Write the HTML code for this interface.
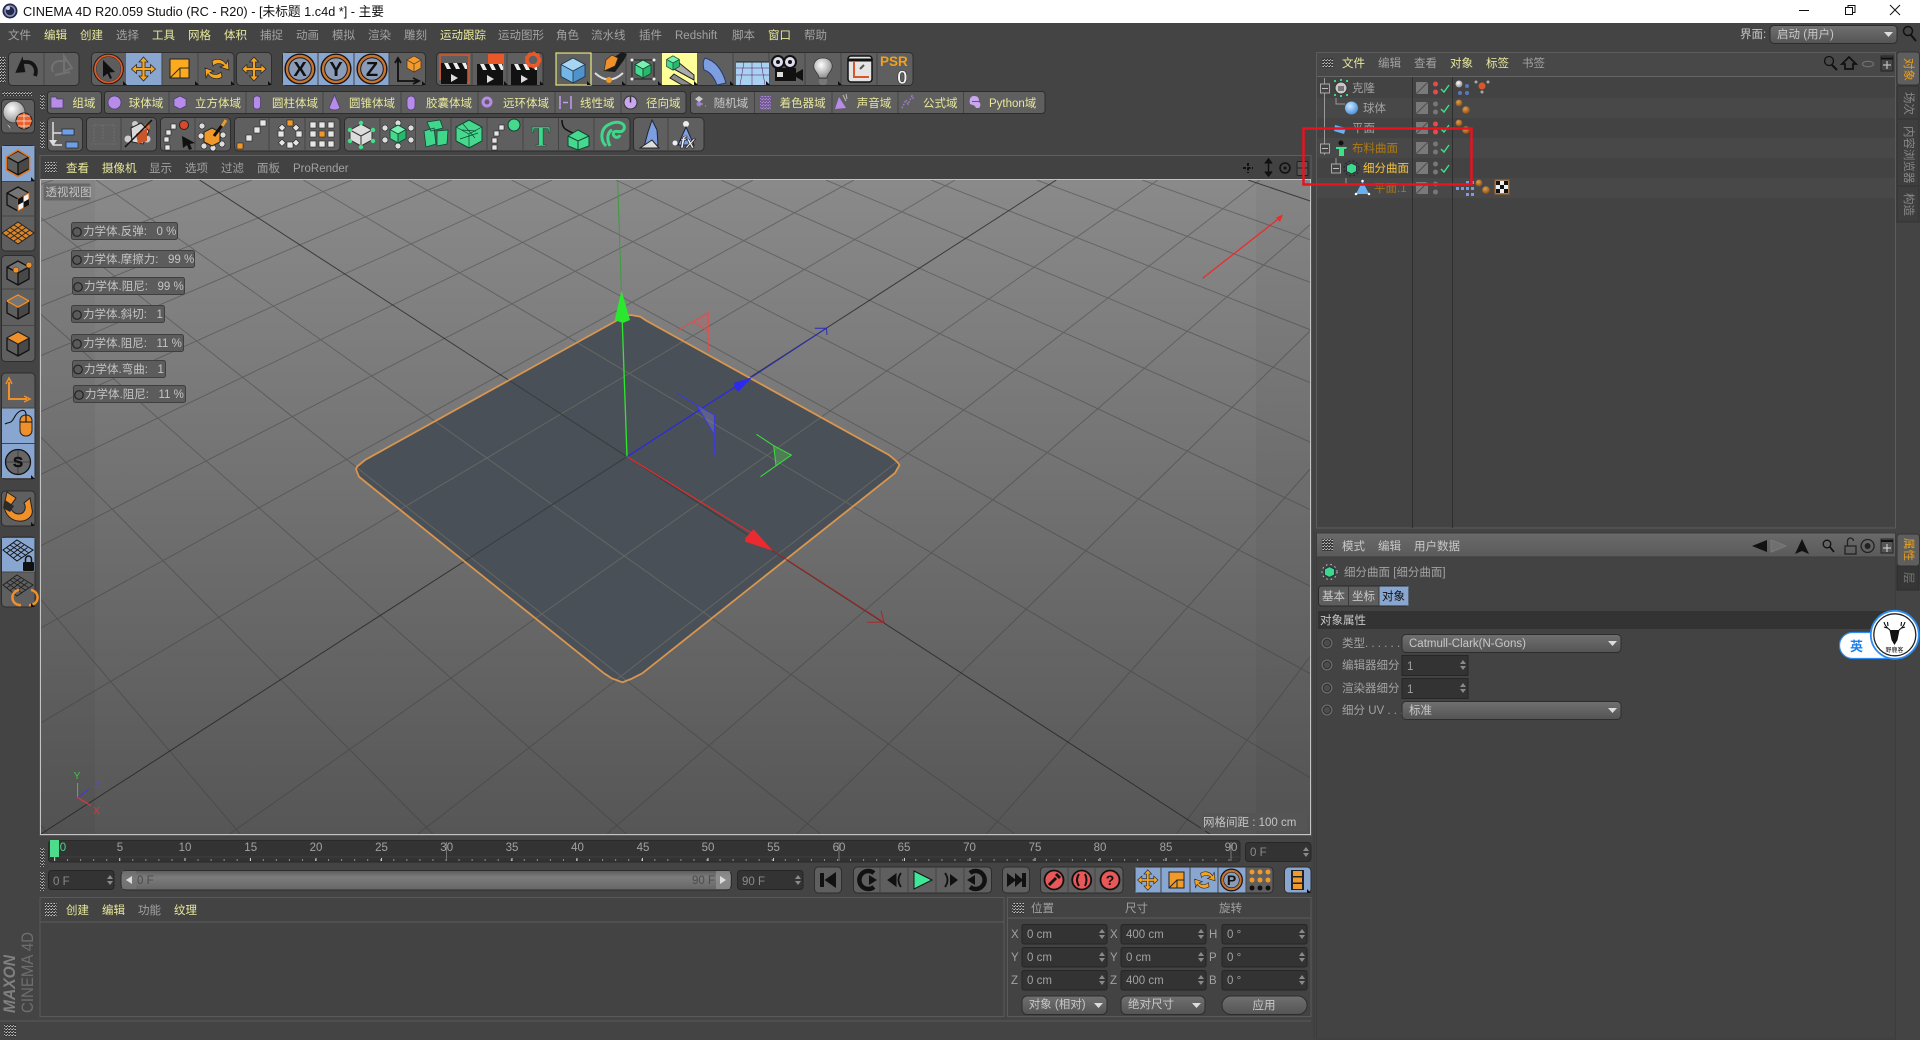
<!DOCTYPE html>
<html><head><meta charset="utf-8"><title>CINEMA 4D</title>
<style>
html,body{margin:0;padding:0;background:#444;width:1920px;height:1040px;overflow:hidden}
svg{position:absolute;left:0;top:0;display:block}
text{font-family:"Liberation Sans","Noto Sans CJK SC",sans-serif;font-size:11.5px;fill:#a2a2a2;white-space:pre}
.y{fill:#e8e89c}.w{fill:#c8c8c8}.k{fill:#111}.o{fill:#e8a020}.d{fill:#5a5a5a}
.g{fill:#5f5f5f;stroke:#2d2d2d;stroke-width:1}
.s{stroke:#444;stroke-width:1;fill:none}
.f{fill:#333;stroke:#262626}
.dd{fill:url(#dg);stroke:#2d2d2d}
.lb{fill:#5c5c5c;stroke:#3f3f3f}
.lt{fill:#c4c4c4}
.bl{fill:#88a6d0}
.tb{fill:#3e3e3e;stroke:#333}
</style></head><body>
<svg width="1920" height="1040" viewBox="0 0 1920 1040" xmlns="http://www.w3.org/2000/svg">
<defs>
<pattern id="dt" width="3" height="3" patternUnits="userSpaceOnUse"><rect width="3" height="3" fill="#3a3a3a"/><rect width="1" height="1" fill="#c4c4c4"/><rect x="2" y="0" width="1" height="1" fill="#8c8c8c"/><rect x="1" y="2" width="1" height="1" fill="#a8a8a8"/></pattern>
<linearGradient id="dg" x1="0" y1="0" x2="0" y2="1"><stop offset="0" stop-color="#707070"/><stop offset="1" stop-color="#545454"/></linearGradient>
<linearGradient id="vp" x1="0" y1="0" x2="0" y2="1"><stop offset="0" stop-color="#8a8a8a"/><stop offset="1" stop-color="#565656"/></linearGradient>
<linearGradient id="sl" x1="0" y1="0" x2="0" y2="1"><stop offset="0" stop-color="#5c5c5c"/><stop offset=".35" stop-color="#7c7c7c"/><stop offset="1" stop-color="#666"/></linearGradient>
<linearGradient id="hd" x1="0" y1="0" x2="0" y2="1"><stop offset="0" stop-color="#6a6a6a"/><stop offset="1" stop-color="#5a5a5a"/></linearGradient>
<radialGradient id="bb" cx=".4" cy=".35" r=".7"><stop offset="0" stop-color="#cfe6ff"/><stop offset="1" stop-color="#3f8fe0"/></radialGradient>
<radialGradient id="brn" cx=".4" cy=".35" r=".7"><stop offset="0" stop-color="#e0a050"/><stop offset="1" stop-color="#8a4a10"/></radialGradient>
<radialGradient id="wb" cx=".4" cy=".35" r=".7"><stop offset="0" stop-color="#fff"/><stop offset="1" stop-color="#888"/></radialGradient>
<g id="cb"><path d="M0-12 11-6 0 0-11-6Z" fill="#757575"/><path d="M-11-6 0 0V12L-11 6Z" fill="#5e5e5e"/><path d="M0 0 11-6V6L0 12Z" fill="#484848"/><path d="M0-12 11-6V6L0 12-11 6V-6ZM-11-6 0 0 11-6M0 0V12" fill="none" stroke="#111" stroke-width="1.3"/></g>
<g id="gc"><path d="M0-9 8-4.5 0 0-8-4.5Z" fill="#7cf0b0"/><path d="M-8-4.5 0 0V9L-8 4.5Z" fill="#46d88c"/><path d="M0 0 8-4.5V4.5L0 9Z" fill="#28b86c"/><path d="M0-9 8-4.5V4.5L0 9-8 4.5V-4.5ZM-8-4.5 0 0 8-4.5M0 0V9" fill="none" stroke="#143" stroke-width=".9"/></g>
<path id="mv" d="M0-12 4.5-7H1.5V-1.5H7V-4.5L12 0 7 4.5V1.5H1.5V7H4.5L0 12-4.5 7H-1.5V1.5H-7V4.5L-12 0-7-4.5V-1.5H-1.5V-7H-4.5Z" fill="#f7a41e" stroke="#2a2a2a" stroke-width=".8"/>
<path id="rt" d="M-4-8A10 10 0 0 1 10-5L12-9 13 1 4-2 8-3.500A8 8 0 0 0-3-3ZM6 8A10 10 0 0 1-8 5L-10 9-11-1-2 2-6 3.500A8 8 0 0 0 5 3Z" fill="#f7a41e" stroke="#222" stroke-width=".7"/>
<path id="spin" d="M0 4 3 0 6 4ZM0 6H6L3 10Z" fill="#8a8a8a"/>
<path id="tri" d="M0 0H9L4.500 5Z" fill="#ddd"/>
<g id="clap"><rect x="-13" y="-3" width="26" height="15" fill="#111"/><path d="M-13-9H13V-3H-13Z" fill="#111"/><path d="M-10-9-7-3H-3L-6-9ZM-1-9 2-3H6L3-9ZM8-9 11-3H13V-6L12-9Z" fill="#eee"/><path d="M-3 2 4 6-3 10Z" fill="#ddd"/></g>
<g id="rad"><circle r="6" fill="#6a6a6a" stroke="#3a3a3a" stroke-width=".8"/><circle r="3.700" fill="#4c4c4c" stroke="#2f2f2f"/></g>
<g id="ck"><path d="M-4 0-1 3 4-4" fill="none" stroke="#3fe08a" stroke-width="1.4"/></g>
<g id="bd"><circle cx="0" cy="0" r="3.400" fill="url(#brn)"/><circle cx="7" cy="7" r="3.800" fill="url(#brn)"/></g>
<g id="gl"><path fill="none" d="M41 184.250L53.200 180M41 221L152.800 180M41 261.100L251.900 180M41 305.900L351.900 180M41 355.600L451.600 180M41 411.400L552.100 180M41 474.300L652.300 180M41 545.700L753 180M41 627.800L853.900 180M41 722.800L955 180M229.500 834L1157.800 180M417.900 834L1259.800 180M607 834L1310 224.800M796.600 834L1310 331M986.300 834L1310 469.200M1176.400 834L1310 656.700M41 825.100L47.400 834M41 599.600L240.200 834M41 437.200L433 834M41 314.300L626.500 834M41 218L820.600 834M96.200 180L1015 834M303.300 180L1310 777.600M408.500 180L1310 673.500M511.500 180L1310 586.200M616 180L1310 509.500M720.900 180L1310 442M825.800 180L1310 382.600M931 180L1310 329.700M1036.600 180L1310 282.300M1142 180L1310 239.700"/></g>
<path id="pl" d="M615 321.500 625 316 631 315 640.400 316.700 646 320.500 889 455 897 461.700 899.500 465 895 473 642.300 673.300 631 679 622.400 682.300 611.700 678.300 604 673.300 363 480 359 476.700 356 469.300 357 466.700 365 460Z"/>
<clipPath id="plc"><use href="#pl"/></clipPath>
<clipPath id="vc"><rect x="41" y="180" width="1269" height="654"/></clipPath>
</defs>

<rect width="1920" height="1040" fill="#444"/>
<!-- title bar -->
<rect width="1920" height="23" fill="#fff"/>
<circle cx="10" cy="11" r="7.500" fill="#222a48"/><circle cx="10" cy="11" r="5" fill="none" stroke="#8a90c0" stroke-width="1.500"/><circle cx="8" cy="8" r="2" fill="#cfd4ee"/>
<text x="23" y="16" style="font-size:13px;fill:#111" textLength="361" lengthAdjust="spacingAndGlyphs">CINEMA 4D R20.059 Studio (RC - R20) - [未标题 1.c4d *] - 主要</text>
<path d="M1799 10.500H1809" stroke="#111" fill="none"/>
<path d="M1845.500 7.500H1852.500V14.500H1845.500ZM1848 7V5.500H1855V12.500H1853" stroke="#111" fill="none"/>
<path d="M1890 5 1900 15M1900 5 1890 15" stroke="#111" fill="none"/>

<!-- menu -->
<g>
<text x="8" y="39">文件</text><text class="y" x="44" y="39">编辑</text><text class="y" x="80" y="39">创建</text><text x="116" y="39">选择</text><text class="y" x="152" y="39">工具</text><text class="y" x="188" y="39">网格</text><text class="y" x="224" y="39">体积</text><text x="260" y="39">捕捉</text><text x="296" y="39">动画</text><text x="332" y="39">模拟</text><text x="368" y="39">渲染</text><text x="404" y="39">雕刻</text><text class="y" x="440" y="39">运动跟踪</text><text x="498" y="39">运动图形</text><text x="556" y="39">角色</text><text x="591" y="39">流水线</text><text x="639" y="39">插件</text><text x="675" y="39">Redshift</text><text x="732" y="39">脚本</text><text class="y" x="768" y="39">窗口</text><text x="804" y="39">帮助</text>
<text x="1740" y="38" class="w">界面:</text>
<rect x="1770" y="25.500" width="127" height="18" rx="4" class="dd"/><text x="1777" y="38" class="w">启动 (用户)</text><use href="#tri" x="1884" y="32"/>
<circle cx="1908" cy="31" r="4.500" fill="none" stroke="#111" stroke-width="1.500"/><path d="M1911 35 1916 41" stroke="#111" stroke-width="2"/>
</g>

<!-- grips -->
<rect x="0" y="57" width="6" height="26" fill="url(#dt)"/><rect x="40" y="94" width="5" height="15" fill="url(#dt)"/><rect x="40" y="122" width="5" height="26" fill="url(#dt)"/>
<rect x="2" y="91" width="30" height="5" fill="url(#dt)"/>

<!-- toolbar row 1 -->
<rect class="g" x="8.500" y="52.500" width="70.500" height="33" rx="4"/><path class="s" d="M44 53V85"/>
<path d="M35 76C38 68 33 62 27 62H21" fill="none" stroke="#151515" stroke-width="3.800"/><path d="M14 72 24 57V73Z" fill="#151515" transform="rotate(-10 20 65)"/>
<path d="M53 72C50 66 54 61 60 61H66M72 68 64 56V71ZM55 75 70 72" fill="none" stroke="#727272" stroke-width="2"/>

<rect class="g" x="91.500" y="52.500" width="142.500" height="33" rx="4"/><rect class="bl" x="126" y="53" width="36" height="32"/><path class="s" d="M162 53V85M198 53V85"/>
<circle cx="108.500" cy="69" r="13.800" fill="#5d5d5d" stroke="#1e1410" stroke-width="3"/><circle cx="108.500" cy="69" r="13.500" fill="none" stroke="#dc5a2a" stroke-width="1.800"/>
<path d="M103 60 115 72 109.500 72.500 112 78 110 79 107.500 73.500 103 77Z" fill="#111"/>
<use href="#mv" x="143.500" y="69"/>
<path d="M170 59H189V78H170Z" fill="#fbab1d" stroke="#222"/><path d="M170 78 180 68H189M180 68V78" fill="none" stroke="#2a2a2a" stroke-width="1"/>
<use href="#rt" x="216" y="69"/>
<rect class="g" x="236.500" y="52.500" width="35" height="33" rx="4"/><use href="#mv" x="254" y="69"/>

<rect class="g" x="282.500" y="52.500" width="143" height="33" rx="4"/><rect class="bl" x="283" y="53" width="106" height="32"/><path class="s" d="M318 53V85M354 53V85M389 53V85"/>
<g fill="#8a9cb8" stroke="#1e1410" stroke-width="1.500"><circle cx="300" cy="69" r="14.800"/><circle cx="336" cy="69" r="14.800"/><circle cx="372" cy="69" r="14.800"/></g>
<g fill="none" stroke="#c8742a" stroke-width="2.200"><circle cx="300" cy="69" r="13"/><circle cx="336" cy="69" r="13"/><circle cx="372" cy="69" r="13"/></g>
<g fill="none" stroke="#1e1410" stroke-width="1"><circle cx="300" cy="69" r="11.300"/><circle cx="336" cy="69" r="11.300"/><circle cx="372" cy="69" r="11.300"/></g>
<g><text class="k" x="300" y="76" text-anchor="middle" style="font-size:20px;font-weight:700">X</text><text class="k" x="336" y="76" text-anchor="middle" style="font-size:20px;font-weight:700">Y</text><text class="k" x="372" y="76" text-anchor="middle" style="font-size:20px;font-weight:700">Z</text></g>
<path d="M398 59V81H417M395 63 398 58 401 63M413 78 419 81 413 84" fill="none" stroke="#111" stroke-width="1.800"/>
<path d="M407 60 414 56 421 60 414 64ZM407 60V68L414 72V64ZM414 64 421 60V68L414 72Z" fill="#f39a2d" stroke="#432" stroke-width=".7"/>

<rect class="g" x="436.500" y="52.500" width="106.500" height="33" rx="4"/><path class="s" d="M472 53V85M507 53V85"/>
<path d="M440 80V55H469V83H462" fill="none" stroke="#d8562a" stroke-width="1.500"/>
<use href="#clap" x="454" y="72"/>
<path d="M488 54H504V70H488Z" fill="#e8582a"/><use href="#clap" x="490" y="73"/>
<use href="#clap" x="524" y="73"/><circle cx="533" cy="60" r="6" fill="none" stroke="#e8582a" stroke-width="3.500"/><circle cx="533" cy="60" r="7.500" fill="none" stroke="#e8582a" stroke-width="1.800" stroke-dasharray="2.500 2.500"/>

<rect class="g" x="555.500" y="52.500" width="357.500" height="33" rx="4"/>
<rect x="662" y="53" width="35" height="32" fill="#ffff99"/><path class="s" d="M591 53V85M626 53V85M733 53V85M769 53V85M805 53V85M841 53V85M877 53V85"/>
<rect x="556" y="53" width="35" height="32" fill="none" stroke="#e8e880" stroke-width="1.200"/>
<path d="M573 58 585 64.500 573 71 561 64.500Z" fill="#a7d6f4"/><path d="M561 64.500 573 71V83L561 76.500Z" fill="#73b6e8"/><path d="M573 71 585 64.500V76.500L573 83Z" fill="#4f93cc"/><path d="M573 58 585 64.500V76.500L573 83 561 76.500V64.500ZM561 64.500 573 71 585 64.500M573 71V83" fill="none" stroke="#234" stroke-width=".8"/>
<path d="M604 71 608 61 622 52 627 54 624 60 615 72Z" fill="#1a1a1a"/><path d="M604 71 606 60 612 55 618 58 615 66Z" fill="#f0902a" stroke="#332" stroke-width=".7"/><path d="M595 73Q609 86 623 73" fill="none" stroke="#ddd" stroke-width="2"/><circle cx="609" cy="80" r="3" fill="#f09a2a"/>
<use href="#gc" x="643" y="69"/><path d="M632 60H654V79H632Z" fill="none" stroke="#222"/><path d="M632 60h.01M654 60h.01M632 79h.01M654 79h.01" stroke="#eee" stroke-width="3" stroke-linecap="round"/>
<path d="M672 68 694 80V75L678 62Z" fill="#aaa" stroke="#222"/><path d="M674 74 692 85H682L670 78Z" fill="#8a8a8a" stroke="#222"/><use href="#gc" transform="translate(673 63) scale(.8)"/>
<path d="M705 58Q720 62 726 83L717 85Q712 72 704 70 702 62 705 58Z" fill="#7d9ee0" stroke="#2a3a66"/>
<path d="M736 62H769V85H736Z" fill="#a9d2f0"/><path d="M736 68H769M736 75H769M752 62V85M744 62 740 85M761 62 765 85" stroke="#516" stroke-width=".5" fill="none"/><path d="M736 62H769" stroke="#222"/>
<circle cx="778" cy="62" r="6" fill="#dde" stroke="#111" stroke-width="2"/><circle cx="790" cy="62" r="6" fill="#dde" stroke="#111" stroke-width="2"/><circle cx="778" cy="62" r="2" fill="#111"/><circle cx="790" cy="62" r="2" fill="#111"/><rect x="775" y="68" width="21" height="13" fill="#111"/><path d="M796 73 803 69V81L796 77Z" fill="#111"/><rect x="777" y="72" width="6" height="5" fill="#ddd"/>
<path d="M823 58C830 58 833 63 832 68 831 72 827 74 827 78H819C819 74 815 72 814 68 813 63 816 58 823 58Z" fill="url(#wb)" stroke="#333" stroke-width=".7"/><path d="M819 79H827V83L825 85H821L819 83Z" fill="#777"/>
<rect x="848" y="56" width="24" height="26" rx="3" fill="#e4e4e4" stroke="#111" stroke-width="1.500"/><path d="M848 60H872" stroke="#111" stroke-width="3"/><path d="M854 62V77H869" fill="none" stroke="#d8562a" stroke-width="2"/><path d="M860 69 864 65" stroke="#555" stroke-width="2"/>
<text x="880" y="66" style="font-size:13.500px;font-weight:700;fill:#f0a020">PSR</text><text x="897" y="84" style="font-size:19px;font-weight:700;fill:#f2f2f2;stroke:#222;stroke-width:.5">0</text>
<g fill="#111"><path d="M123 85V81L127 85ZM195 85V81L199 85ZM231 85V81L235 85Z"/><path d="M268 85V81L272 85ZM422 85V81L426 85ZM504 85V81L508 85ZM540 85V81L544 85ZM587 85V81L591 85ZM622 85V81L626 85ZM658 85V81L662 85ZM694 85V81L698 85ZM730 85V81L734 85ZM766 85V81L770 85ZM838 85V81L842 85Z"/></g>

<!-- row 2 -->
<rect class="g" x="47.500" y="91.500" width="54" height="22" rx="3"/>
<rect class="g" x="104.500" y="91.500" width="581.500" height="22" rx="3"/>
<rect class="g" x="690.500" y="91.500" width="354.500" height="22" rx="3"/>
<path class="s" d="M169 92V113M246 92V113M323 92V113M401 92V113M478 92V113M555 92V113M621 92V113M754.500 92V113M832 92V113M898 92V113M963.500 92V113"/>
<g fill="#b78ce8" stroke="#4a3a70" stroke-width=".7">
<path d="M51 97H56L57 99H63V108H51Z"/><circle cx="114.500" cy="102.500" r="6.500"/><path d="M180 96 186 99V106L180 109 174 106V99Z"/><rect x="253.500" y="96" width="7" height="13" rx="3"/><path d="M334.500 95 340 108Q334.500 112 329 108Z"/><rect x="407" y="96" width="8" height="14" rx="4"/>
</g>
<circle cx="487" cy="102" r="4" fill="none" stroke="#b78ce8" stroke-width="3"/><path d="M560 96V109M571 96V109M563 102.500H568" stroke="#c49cf0" stroke-width="1.500" fill="none"/>
<circle cx="630.500" cy="102.500" r="6.500" fill="#c9a6f0" stroke="#333"/><path d="M630.500 96V102.500" stroke="#333" stroke-width="1.500"/>
<circle cx="699" cy="104" r="2.500" fill="#a27ad8"/><path d="M695 99 699 96 703 99 699 102Z" fill="#ccc"/><path d="M700 104h3m2 2h1" stroke="#aaa"/>
<rect x="760" y="96" width="11" height="14" fill="url(#dt)"/><rect x="760" y="96" width="11" height="14" fill="#9a70d0" opacity=".6"/>
<path d="M835 109 839 97 846 108Z" fill="#b78ce8"/><path d="M843 95 846 101M846 94 847 99" stroke="#bbb"/>
<path d="M902 108 906 100 908 104 912 96 914 100" fill="none" stroke="#a27ad8" stroke-dasharray="1.500 1.500" stroke-width="1.500"/>
<path d="M974 96C978 96 979 98 979 101H972V102H978C981 102 981 106 979 108H976C975 105 972 105 970 104 969 100 970 96 974 96Z" fill="#c9a6f0"/>
<g><text class="y" x="72.400" y="107">组域</text><text class="y" x="128.800" y="107">球体域</text><text class="y" x="195" y="107">立方体域</text><text class="y" x="272" y="107">圆柱体域</text><text class="y" x="349" y="107">圆锥体域</text><text class="y" x="426" y="107">胶囊体域</text><text class="y" x="503" y="107">远环体域</text><text class="y" x="580" y="107">线性域</text><text class="y" x="646" y="107">径向域</text><text x="713.700" y="107" class="w">随机域</text><text class="y" x="779.600" y="107">着色器域</text><text class="y" x="856.800" y="107">声音域</text><text class="y" x="923" y="107">公式域</text><text class="y" x="989" y="107">Python域</text></g>

<!-- row 3 -->
<g>
<rect class="g" x="47.500" y="117.500" width="35" height="33.500" rx="4"/>
<rect class="g" x="86.500" y="117.500" width="70" height="33.500" rx="4"/><path class="s" d="M121 118V151"/>
<rect class="g" x="160.500" y="117.500" width="70" height="33.500" rx="4"/><path class="s" d="M195 118V151"/>
<rect class="g" x="234.500" y="117.500" width="105.500" height="33.500" rx="4"/><path class="s" d="M269 118V151M305 118V151"/>
<rect class="g" x="344.500" y="117.500" width="285.500" height="33.500" rx="4"/><path class="s" d="M380 118V151M415.500 118V151M451 118V151M487 118V151M523 118V151M558.500 118V151M594 118V151"/>
<rect class="g" x="633.500" y="117.500" width="70.500" height="33.500" rx="4"/><path class="s" d="M668 118V151"/>
</g>
<path d="M53 122V142M53 136V122M53 133H62M53 145H62" fill="none" stroke="#ddd" stroke-width="1.500"/><path d="M49 140H57L53 146Z" fill="#ddd"/><rect x="62" y="129" width="12" height="6" fill="#6ea0e8" stroke="#222" stroke-width=".7"/><rect x="66" y="142" width="12" height="6" fill="#6ea0e8" stroke="#222" stroke-width=".7"/>
<path d="M91 144H117M94 125H114M94 125V143M114 125V143M103 125V140" fill="none" stroke="#6e6e6e" stroke-dasharray="2 1"/>
<circle cx="128" cy="139" r="3.500" fill="#ccc"/><circle cx="147" cy="139" r="3.500" fill="#ccc"/><circle cx="135" cy="124" r="3" fill="#ccc"/><circle cx="147" cy="127" r="3" fill="#e8682a"/><path d="M131 128 141 123 149 131 143 144 132 142Z" fill="#d9d9d9" stroke="#222"/><path d="M136 134 147 128 147 141 138 144Z" fill="#c9552a"/><path d="M125 147 152 120" stroke="#111" stroke-width="1.500"/>
<g fill="#e8e8e8" stroke="#222" stroke-width=".6"><rect x="165" y="145" width="5" height="5"/><rect x="164" y="137" width="5" height="5"/><rect x="166" y="130" width="5" height="5"/><rect x="171" y="124" width="5" height="5"/></g><circle cx="184" cy="125" r="4.500" fill="#d8482a" stroke="#222"/><path d="M182 136 195 143 190 144 192 149 189 150 187 145 183 148Z" fill="#111"/>
<g fill="#ddd" stroke="#222" stroke-width=".6"><circle cx="202" cy="126" r="3"/><circle cx="201" cy="136" r="3"/><circle cx="204" cy="146" r="3"/><circle cx="213" cy="148" r="3"/><circle cx="222" cy="144" r="3"/><circle cx="223" cy="135" r="3"/></g><path d="M212 128 220 132V142L212 146 204 142V132Z" fill="#f0982a" stroke="#222"/><path d="M214 136 226 120" stroke="#111" stroke-width="3"/><path d="M222 126 226 120" stroke="#f09a2a" stroke-width="3"/>
<g fill="#e6e6e6" stroke="#222" stroke-width=".6"><rect x="246" y="135" width="6" height="6"/><rect x="254" y="127" width="6" height="6"/><rect x="260" y="120" width="6" height="6"/></g><rect x="237" y="143" width="6" height="6" fill="#f0982a" stroke="#222" stroke-width=".6"/>
<g fill="#e6e6e6" stroke="#222" stroke-width=".6"><rect x="278" y="131" width="6" height="6"/><rect x="296" y="131" width="6" height="6"/><rect x="287" y="142" width="6" height="6"/><rect x="280" y="125" width="5" height="5" transform="rotate(45 282 127)"/><rect x="294" y="125" width="5" height="5" transform="rotate(45 296 127)"/><rect x="280" y="140" width="5" height="5" transform="rotate(45 282 142)"/><rect x="294" y="140" width="5" height="5" transform="rotate(45 296 142)"/></g><rect x="287" y="120" width="6" height="6" fill="#f0982a" stroke="#222" stroke-width=".6"/>
<g fill="#e6e6e6" stroke="#222" stroke-width=".6"><rect x="310" y="122" width="6" height="6"/><rect x="319" y="122" width="6" height="6"/><rect x="328" y="122" width="6" height="6"/><rect x="310" y="131" width="6" height="6"/><rect x="328" y="131" width="6" height="6"/><rect x="310" y="141" width="6" height="6"/><rect x="319" y="141" width="6" height="6"/><rect x="328" y="141" width="6" height="6"/></g><rect x="319" y="131" width="6" height="6" fill="#f0982a" stroke="#222" stroke-width=".6"/>
<path d="M361 124 372 130V140L361 146 350 140V130Z" fill="#dcdcdc" stroke="#333"/><path d="M350 130 361 136 372 130M361 136V146" fill="none" stroke="#333"/><g fill="#3fe08a"><circle cx="350" cy="130" r="2.200"/><circle cx="373" cy="130" r="2.200"/><circle cx="361" cy="123" r="2.200"/><circle cx="350" cy="141" r="2.200"/><circle cx="373" cy="141" r="2.200"/><circle cx="361" cy="147" r="2.200"/></g>
<g fill="#ddd" stroke="#222" stroke-width=".6"><circle cx="398" cy="123" r="3"/><circle cx="398" cy="146" r="3"/><circle cx="385" cy="128" r="3"/><circle cx="411" cy="128" r="3"/><circle cx="385" cy="140" r="3"/><circle cx="411" cy="140" r="3"/></g><use href="#gc" x="398" y="134"/>
<path d="M427 122 440 120 443 128 431 131ZM424 131 434 128 436 144 426 147ZM437 131 448 130 447 144 437 146Z" fill="#3fd88a" stroke="#143" stroke-width=".8"/>
<path d="M469 120 482 127V141L469 148 456 141V127Z" fill="#46d88c" stroke="#143"/><path d="M456 127 469 134 482 127M469 134V148M463 124 475 138M462 130 476 131M460 139 478 133" fill="none" stroke="#143" stroke-width=".7"/>
<g fill="#e6e6e6" stroke="#222" stroke-width=".6"><rect x="492" y="145" width="5" height="5"/><rect x="492" y="138" width="5" height="5"/><rect x="494" y="131" width="5" height="5"/><rect x="499" y="125" width="5" height="5"/></g><circle cx="514" cy="125" r="6" fill="#46d88c" stroke="#143"/>
<text x="541" y="146" text-anchor="middle" style="font-family:'Liberation Serif',serif;font-size:28px;font-weight:700;fill:#3fd88a;stroke:#143;stroke-width:.5">T</text>
<path d="M562 120C562 132 570 130 578 136" fill="none" stroke="#111" stroke-width="1.500"/><path d="M578 130 589 136V146L578 150 568 146V136Z" fill="#46d88c" stroke="#143"/><path d="M568 136 578 141 589 136M578 141V150" fill="none" stroke="#143"/>
<path d="M606 146C600 140 600 128 610 124 619 120 626 124 624 129 622 134 616 130 614 132 611 136 618 140 620 135M610 146C606 138 608 132 612 130" fill="none" stroke="#3fd88a" stroke-width="3"/>
<path d="M652 120 657 130 658 145 644 147 648 132Z" fill="#7d9ee0" stroke="#223"/><path d="M640 148 652 140 659 148Z" fill="#ddd" stroke="#222"/>
<circle cx="686" cy="124" r="3" fill="#eee"/><path d="M686 127 694 145H678Z" fill="#7d9ee0" stroke="#223"/><circle cx="675" cy="143" r="2.500" fill="#eee"/><text x="680" y="148" style="font-size:17px;font-weight:700;font-style:italic;fill:#eee;stroke:#111;stroke-width:.6">fx</text>

<!-- left bar -->
<rect class="g" x="1.500" y="99.500" width="33" height="33.500" rx="4"/>
<circle cx="14" cy="112" r="11" fill="url(#wb)" stroke="#444"/><circle cx="24" cy="121" r="8" fill="#e8602a" stroke="#222"/><path d="M16 121H32M24 113V129M18 116H30M18 126H30" stroke="#eee" stroke-width=".7"/><path d="M6 122 12 128 8 128 12 132" fill="#ddd" stroke="#555"/>
<rect class="g" x="1.500" y="145.500" width="33.500" height="105.500" rx="4"/><rect class="bl" x="2" y="146" width="32.500" height="35"/><path class="s" d="M2 181.500H35M2 216H35"/>
<use href="#cb" x="18" y="163"/><path d="M18 150 29.500 157V170L18 176.500 6.500 170V157Z" fill="none" stroke="#e0761e" stroke-width="1.500"/>
<use href="#cb" x="18" y="199"/><path d="M18 199 29 193V205L18 211Z" fill="#f5f5f5" stroke="#e0761e"/><path d="M18 199l5.500-3v6l-5.500 3zM23.500 202l5.500-3v6l-5.500 3z" fill="#111"/>
<path d="M18 222 34 233 18 244 2 233Z" fill="#d98428" stroke="#222"/><path d="M10 227.500 26 238.500M14 225 30 236M6 230 22 241M26 227.500 10 238.500M22 225 6 236M30 230 14 241" stroke="#222" stroke-width=".8"/>
<rect class="g" x="1.500" y="255.500" width="33.500" height="106" rx="4"/><path class="s" d="M2 289H35M2 325.500H35"/>
<use href="#cb" x="18" y="273"/><circle cx="16" cy="270" r="3" fill="#f0902a" stroke="#222" stroke-width=".5"/><circle cx="29" cy="265" r="3" fill="#f0902a" stroke="#222" stroke-width=".5"/>
<use href="#cb" x="18" y="307"/><path d="M7 301 18 295 29 301" fill="none" stroke="#f0902a" stroke-width="1.500"/><path d="M7 301 18 307 29 301" fill="none" stroke="#f0902a" stroke-width="1.500"/>
<use href="#cb" x="18" y="344"/><path d="M18 332 29 338 18 344 7 338Z" fill="#f0902a" stroke="#222" stroke-width=".8"/>
<rect class="g" x="1.500" y="373" width="33.500" height="106" rx="4"/><rect class="bl" x="2" y="408" width="32.500" height="70"/><path class="s" d="M2 408H35M2 443.500H35"/>
<path d="M9 382V399H27" fill="none" stroke="#f0902a" stroke-width="2"/><path d="M6 384 9 378 12 384M24 396 30 399 24 402" fill="none" stroke="#f0902a" stroke-width="1.500"/>
<rect x="20" y="415" width="12" height="21" rx="5.500" fill="#f0902a" stroke="#222"/><path d="M20 422H32M26 415V422M26 415C26 407 18 410 14 418 11 424 8 422 5 424" fill="none" stroke="#111" stroke-width="1.100"/>
<circle cx="18" cy="462" r="12.500" fill="#666" stroke="#111" stroke-width="1.300"/><path d="M18 449V475M5 462H31" stroke="#222" stroke-width=".6"/><text x="18" y="467" text-anchor="middle" style="font-size:15px;font-weight:900;fill:#111;stroke:#111;stroke-width:.5">S</text>
<rect class="g" x="1.500" y="491" width="33.500" height="35" rx="4"/><path d="M7 496 16 502 11 509C9 513 14 518 19 518 24 518 27 512 24 507L30 502 32 513C34 521 26 526 18 525 9 524 2 515 5 505Z" fill="#f0902a" stroke="#222" transform="translate(0 -4)"/><path d="M5 500 14 506 10 512 3 508Z" fill="#2a2a2a"/>
<rect class="g" x="1.500" y="537" width="33.500" height="70" rx="4"/><rect class="bl" x="2" y="538" width="32.500" height="34"/><path class="s" d="M2 572H35"/>
<g id="lg"><path d="M17 540 33 550 17 561 3 550Z" fill="none" stroke="#111"/><path d="M10 545 26 555.500M13.500 543 29 553M6.500 547.500 22 558M24 545 10 555.500M20.500 543 6.500 553M27.500 547.500 13.500 558" stroke="#111" stroke-width=".8"/></g>
<rect x="23" y="562" width="11" height="9" rx="1" fill="#111"/><path d="M25.500 562V559A3 3 0 0 1 31.500 559V562" fill="none" stroke="#111" stroke-width="1.500"/>
<path d="M17 575 33 585 17 596 3 585Z" fill="none" stroke="#222"/><path d="M10 580 26 590.500M13.500 578 29 588M6.500 582.500 22 593M24 580 10 590.500M20.500 578 6.500 588M27.500 582.500 13.500 593" stroke="#222" stroke-width=".8"/>
<path d="M19 590A6.500 6.500 0 0 0 21 605M31 590A6.500 6.500 0 0 1 29 605" fill="none" stroke="#f0902a" stroke-width="2.500"/>
<g fill="#111"><path d="M31 181V177L35 181ZM31 479V475L35 479ZM31 526V522L35 526ZM31 607V603L35 607Z"/></g>

<!-- viewport panel -->
<rect x="40" y="155.500" width="1271" height="680" fill="#424242" stroke="#5e5e5e"/>
<rect x="45" y="162" width="12" height="11" fill="url(#dt)"/>
<text class="y" x="66" y="172">查看</text><text class="y" x="102" y="172">摄像机</text><text x="149" y="172">显示</text><text x="185" y="172">选项</text><text x="221" y="172">过滤</text><text x="257" y="172">面板</text><text x="293" y="172">ProRender</text>
<path d="M1248 163V173M1243 168H1253" stroke="#111" stroke-width="2" stroke-dasharray="3 1.500"/><path d="M1268.500 160V175M1265 163.500 1268.500 159 1272 163.500M1265 171.500 1268.500 176 1272 171.500" fill="#111" stroke="#111" stroke-width="1.500"/><circle cx="1285" cy="168" r="5" fill="none" stroke="#111" stroke-width="1.500"/><circle cx="1285" cy="168" r="1.500" fill="#111"/><rect x="1297" y="161.500" width="11" height="14" rx="1" fill="#555" stroke="#222"/><path d="M1297 168H1308" stroke="#222"/>

<g clip-path="url(#vc)">
<rect x="41" y="180" width="1269" height="654" fill="url(#vp)"/>
<rect x="41" y="180" width="54" height="654" fill="#000" opacity=".035"/><rect x="1256" y="180" width="54" height="654" fill="#000" opacity=".035"/>
<use href="#gl" stroke="#3a3a3a" stroke-opacity=".42"/>
<path d="M41 834L1056.300 180M199.600 180L1209.900 834M1248 180L1310 200.900" fill="none" stroke="#222" stroke-opacity=".75"/>
<use href="#pl" fill="#4a5058"/>
<g clip-path="url(#plc)"><use href="#gl" stroke="#6c6e66" stroke-opacity=".75"/><path d="M41 834L1056.300 180M199.600 180L1209.900 834" fill="none" stroke="#383c3c"/></g>
<use href="#pl" fill="none" stroke="#d9964f" stroke-width="1.800"/>
<!-- gizmo -->
<path d="M627 456.700 621.500 300" stroke="#2ee82e" stroke-width="1.300" fill="none"/><path d="M621.500 295 617.600 180" stroke="#3c9c3c" fill="none"/>
<path d="M621.500 290.500 630 320 622.800 323 614.700 320Z" fill="#2ae82e"/>
<path d="M627 456.700 738 385" stroke="#2a2ae8" stroke-width="1.200" fill="none"/><path d="M752 377 826.300 328.300" stroke="#2b2bb8" fill="none"/><path d="M752.300 377.300 733.800 383 735 389 738.500 391.500Z" fill="#2b2bee"/><path d="M814.800 328.300H826.500L827 335" stroke="#2b2bb8" fill="none"/>
<path d="M627 456.700 753 534" stroke="#e82a2a" stroke-width="1.200" fill="none"/><path d="M772 550 883.900 622.300" stroke="#a82828" fill="none"/><path d="M772.800 550.700 753.500 529.300 745.300 538 745.300 541.700Z" fill="#ea2a2e"/><path d="M867.400 622.300H884L881 610.700" stroke="#a82828" fill="none"/>
<path d="M693.400 321.700 708.300 312.700V331.700Z" fill="#d06060" opacity=".3"/><path d="M677.400 330.700 708.300 312.700V351M693.400 321.700 708.300 331.700" fill="none" stroke="#e84a4a" stroke-width=".9"/>
<path d="M696.700 405 714.400 415V435Z" fill="#8a8ae8" opacity=".3"/><path d="M677.400 393.300 696.700 405 714.400 435V455M696.700 405 714.400 415V435" fill="none" stroke="#3a3ae0"/>
<path d="M773.700 445.700 791.400 455 776 465.700Z" fill="#58c058" opacity=".4"/><path d="M756.400 434.300 773.700 445.700 791.400 455 760.500 476.700M773.700 445.700 776 465.700" fill="none" stroke="#3ae03a"/>
<path d="M1202.700 278.300 1282 216" stroke="#ee2a2a" stroke-width="1.300"/><path d="M1283 214.500 1276 217.500 1280 222Z" fill="#ee2a2a"/>
<!-- corner axis -->
<path d="M77.600 797.700V783" stroke="#3ac83a"/><path d="M77.600 797.700 89 789" stroke="#3a3ae0"/><path d="M77.600 797.700 91 805.700" stroke="#d83a3a" stroke-width="1.200"/>
<text x="73.500" y="779" style="font-size:10.500px;fill:#3ac83a">Y</text><text x="94" y="788" style="font-size:10.500px;fill:#4a4ae8">Z</text><text x="93" y="814" style="font-size:10.500px;fill:#d83a3a">X</text>
<!-- overlays -->
<rect x="43.500" y="183.500" width="47" height="17" rx="2" fill="#666" opacity=".95"/><text x="45.500" y="196" class="lt">透视视图</text>
<g>
<rect x="71.500" y="222.500" width="106" height="17" rx="2" class="lb"/><rect x="71.500" y="250.500" width="123" height="17" rx="2" class="lb"/><rect x="72.500" y="277.500" width="112" height="17" rx="2" class="lb"/><rect x="71.500" y="305.500" width="93" height="17" rx="2" class="lb"/><rect x="71.500" y="334.500" width="112" height="17" rx="2" class="lb"/><rect x="72.500" y="360.500" width="93" height="17" rx="2" class="lb"/><rect x="73.500" y="385.500" width="112" height="17" rx="2" class="lb"/>
<g fill="#5a5a5a" stroke="#222" stroke-width="1.200"><circle cx="77" cy="232" r="4.300"/><circle cx="77" cy="260" r="4.300"/><circle cx="78" cy="287" r="4.300"/><circle cx="77" cy="315" r="4.300"/><circle cx="77" cy="344" r="4.300"/><circle cx="78" cy="369.500" r="4.300"/><circle cx="79" cy="395" r="4.300"/></g>
<text class="lt" x="83" y="235">力学体.反弹:   0 %</text><text class="lt" x="83" y="263">力学体.摩擦力:   99 %</text><text class="lt" x="84" y="290">力学体.阻尼:   99 %</text><text class="lt" x="83" y="318">力学体.斜切:   1</text><text class="lt" x="83" y="347">力学体.阻尼:   11 %</text><text class="lt" x="84" y="373">力学体.弯曲:   1</text><text class="lt" x="85" y="398">力学体.阻尼:   11 %</text>
</g>
<rect x="1201" y="813" width="106" height="18" rx="2" fill="#555" opacity=".9"/><text class="lt" x="1203" y="826">网格间距 : 100 cm</text>
</g>
<path d="M40.500 179.500V834.500H1310.500V179.500H40.500" fill="none" stroke="#c4c4c4"/>

<!-- timeline -->
<rect x="40" y="848" width="5" height="19" fill="url(#dt)"/><rect x="40" y="872" width="5" height="19" fill="url(#dt)"/>
<rect x="48.500" y="840.500" width="1191.500" height="21.500" rx="3" fill="#333" stroke="#2a2a2a"/>
<path d="M49 857H1240" stroke="#3f3f3f"/>
<rect x="50" y="840" width="9" height="17" fill="#4cdc8c"/>
<g>
<text x="63" y="851" style="fill:#4cd888" text-anchor="middle">0</text>
<text x="120" y="851" text-anchor="middle">5</text><text x="185" y="851" text-anchor="middle">10</text><text x="250.700" y="851" text-anchor="middle">15</text><text x="316" y="851" text-anchor="middle">20</text><text x="381.500" y="851" text-anchor="middle">25</text><text x="446.700" y="851" text-anchor="middle">30</text><text x="512" y="851" text-anchor="middle">35</text><text x="577.500" y="851" text-anchor="middle">40</text><text x="643" y="851" text-anchor="middle">45</text><text x="708" y="851" text-anchor="middle">50</text><text x="773.500" y="851" text-anchor="middle">55</text><text x="839" y="851" text-anchor="middle">60</text><text x="904" y="851" text-anchor="middle">65</text><text x="969.500" y="851" text-anchor="middle">70</text><text x="1035" y="851" text-anchor="middle">75</text><text x="1100" y="851" text-anchor="middle">80</text><text x="1166" y="851" text-anchor="middle">85</text><text x="1231" y="851" text-anchor="middle">90</text>
</g>
<path d="M54 860H1230" stroke="#aaa" stroke-width="1.500" stroke-dasharray="1 12.050"/>
<path d="M54.700 857V861M119.700 858V861M185 858V861M250.500 858V861M316 858V861M381.500 858V861M512 858V861M577 858V861M642.500 858V861M708 858V861M773.500 858V861M904.500 858V861M970 858V861M1035 858V861M1100 858V861M1166 858V861" stroke="#ccc"/>
<path d="M446.500 842V861M839 842V861M1231 842V861" stroke="#777"/>
<rect x="1245.500" y="842.500" width="65.500" height="19" rx="3" class="f"/><text x="1250" y="856" style="fill:#8a8a8a">0 F</text><use href="#spin" x="1303" y="847"/>
<rect x="48.500" y="870.500" width="65.500" height="19" rx="3" class="f"/><text x="53" y="885" style="fill:#8a8a8a">0 F</text><use href="#spin" x="107" y="875"/>
<rect x="121" y="870.500" width="610.500" height="19.500" rx="5" fill="url(#sl)" stroke="#2d2d2d"/><rect x="122" y="871" width="14" height="18" fill="#777" opacity=".6"/><path d="M132 876V884L126 880Z" fill="#ddd"/><text x="137" y="884" style="fill:#4c4c4c">0 F</text><text x="692" y="884" style="fill:#4c4c4c">90 F</text><rect x="716" y="871" width="14" height="18" fill="#999" opacity=".6"/><path d="M720 876V884L726 880Z" fill="#ddd"/>
<rect x="737.500" y="870.500" width="65.500" height="19" rx="3" class="f"/><text x="742" y="885" style="fill:#8a8a8a">90 F</text><use href="#spin" x="795" y="875"/>

<!-- playback -->
<g>
<rect class="g" x="814.500" y="867" width="27" height="26" rx="4"/><path d="M820 873H824V887H820ZM836 872V888L824.500 880Z" fill="#111"/>
<rect class="g" x="853.500" y="867" width="138" height="26" rx="4"/><path class="s" d="M880 867V893M908 867V893M936 867V893M964 867V893"/>
<path d="M874 873A9 9 0 1 0 874 887" fill="none" stroke="#111" stroke-width="4.500"/><path d="M869 875 877 880 869 885Z" fill="#111"/>
<path d="M888 880 896 874V886Z" fill="#111" stroke="#111"/><path d="M901 873Q896 880 901 887" fill="none" stroke="#111" stroke-width="1.800"/>
<path d="M914 871 932 880 914 889Z" fill="#3fe896" stroke="#111"/>
<path d="M945 873Q950 880 945 887" fill="none" stroke="#111" stroke-width="1.800"/><path d="M950 874 958 880 950 886Z" fill="#111"/>
<path d="M970 873A9 9 0 1 1 970 887" fill="none" stroke="#111" stroke-width="4.500"/><path d="M975 875 967 880 975 885Z" fill="#111"/>
<rect class="g" x="1002.500" y="867" width="27" height="26" rx="4"/><path d="M1007 873 1016 880 1007 887ZM1015 873 1023 880 1015 887ZM1022 873H1026V887H1022Z" fill="#111"/>
<rect class="g" x="1040.500" y="867" width="82.500" height="26" rx="4"/><path class="s" d="M1068 867V893M1095 867V893"/>
<g fill="#e85858" stroke="#111" stroke-width="1.800"><circle cx="1054" cy="880" r="9.500"/><circle cx="1081.700" cy="880" r="9.500"/><circle cx="1110" cy="880" r="9.500"/></g>
<path d="M1049 885 1056 878M1056 874 1060 878" stroke="#111" stroke-width="3" fill="none"/><path d="M1079 874Q1075 880 1079 886M1085 874Q1088 880 1085 886" fill="none" stroke="#111" stroke-width="2"/>
<text class="k" x="1110" y="885" text-anchor="middle" style="font-size:14px;font-weight:700">?</text>
<rect class="g" x="1135" y="867" width="138" height="26" rx="4"/><rect class="bl" x="1135.500" y="867.500" width="111" height="25"/><path class="s" d="M1161 867V893M1190 867V893M1218 867V893M1246 867V893"/>
<use href="#mv" transform="translate(1147.800 880) scale(.85)"/>
<path d="M1169 872H1184V888H1169Z" fill="#f09a2a" stroke="#222"/><path d="M1169 888 1177 880H1184M1177 880V888" fill="none" stroke="#222"/>
<use href="#rt" transform="translate(1204 880) scale(.85)"/>
<circle cx="1231.500" cy="880" r="10.800" fill="#8a9cb8" stroke="#1e1410" stroke-width="1.300"/><circle cx="1231.500" cy="880" r="9.200" fill="none" stroke="#c8742a" stroke-width="1.800"/><circle cx="1231.500" cy="880" r="7.800" fill="none" stroke="#1e1410" stroke-width=".7"/><text class="k" x="1231.500" y="885" text-anchor="middle" style="font-size:14px;font-weight:700">P</text>
<g fill="#f09a2a"><circle cx="1252" cy="872" r="2.500"/><circle cx="1260" cy="872" r="2.500"/><circle cx="1268" cy="872" r="2.500"/><circle cx="1252" cy="880" r="2.500"/><circle cx="1260" cy="880" r="2.500"/><circle cx="1268" cy="880" r="2.500"/></g><g fill="#111"><circle cx="1252" cy="888" r="2.500"/><circle cx="1260" cy="888" r="2.500"/><circle cx="1268" cy="888" r="2.500"/></g>
<rect x="1284.500" y="867" width="26.500" height="26" rx="4" class="bl" stroke="#2d2d2d"/><rect x="1291" y="870" width="13" height="20" fill="#222"/><rect x="1293" y="871" width="9" height="5" fill="#f09a2a"/><rect x="1293" y="877.500" width="9" height="5" fill="#f09a2a"/><rect x="1293" y="884" width="9" height="5" fill="#f09a2a"/><path d="M1307 893V889L1311 893Z" fill="#111"/>
</g>

<!-- material panel -->
<rect x="40" y="897.500" width="964" height="119" fill="#434343" stroke="#5a5a5a"/><path d="M40 922H1004" stroke="#5c5c5c"/>
<rect x="45" y="903" width="12" height="13" fill="url(#dt)"/>
<text class="y" x="66" y="914">创建</text><text class="y" x="102" y="914">编辑</text><text x="138" y="914">功能</text><text class="y" x="174" y="914">纹理</text>
<text transform="translate(15 1013) rotate(-90)" style="font-size:17px;font-weight:900;font-style:italic;fill:#808080" textLength="58" lengthAdjust="spacingAndGlyphs">MAXON</text>
<text transform="translate(33 1013) rotate(-90)" style="font-size:17px;fill:#6e6e6e" textLength="81" lengthAdjust="spacingAndGlyphs">CINEMA 4D</text>

<!-- coordinates -->
<rect x="1007.500" y="897.500" width="303.500" height="119" fill="#434343" stroke="#5a5a5a"/><path d="M1008 918H1311" stroke="#5c5c5c"/>
<rect x="1012" y="903" width="12" height="11" fill="url(#dt)"/>
<text x="1031" y="912">位置</text><text x="1125" y="912">尺寸</text><text x="1219" y="912">旋转</text>
<g><rect class="f" x="1022" y="924.500" width="85" height="19.500" rx="2"/><rect class="f" x="1121" y="924.500" width="85" height="19.500" rx="2"/><rect class="f" x="1222" y="924.500" width="85" height="19.500" rx="2"/><rect class="f" x="1022" y="947.500" width="85" height="19.500" rx="2"/><rect class="f" x="1121" y="947.500" width="85" height="19.500" rx="2"/><rect class="f" x="1222" y="947.500" width="85" height="19.500" rx="2"/><rect class="f" x="1022" y="970.500" width="85" height="19.500" rx="2"/><rect class="f" x="1121" y="970.500" width="85" height="19.500" rx="2"/><rect class="f" x="1222" y="970.500" width="85" height="19.500" rx="2"/></g>
<g><text x="1011" y="938">X</text><text x="1110" y="938">X</text><text x="1209" y="938">H</text><text x="1011" y="961">Y</text><text x="1110" y="961">Y</text><text x="1209" y="961">P</text><text x="1011" y="984">Z</text><text x="1110" y="984">Z</text><text x="1209" y="984">B</text>
<text x="1027" y="938">0 cm</text><text x="1126" y="938">400 cm</text><text x="1227" y="938">0 °</text><text x="1027" y="961">0 cm</text><text x="1126" y="961">0 cm</text><text x="1227" y="961">0 °</text><text x="1027" y="984">0 cm</text><text x="1126" y="984">400 cm</text><text x="1227" y="984">0 °</text></g>
<g><use href="#spin" x="1099" y="929"/><use href="#spin" x="1198" y="929"/><use href="#spin" x="1299" y="929"/><use href="#spin" x="1099" y="952"/><use href="#spin" x="1198" y="952"/><use href="#spin" x="1299" y="952"/><use href="#spin" x="1099" y="975"/><use href="#spin" x="1198" y="975"/><use href="#spin" x="1299" y="975"/></g>
<rect x="1022" y="996" width="85" height="18.500" rx="5" class="dd"/><text class="w" x="1028.700" y="1008">对象 (相对)</text><use href="#tri" x="1094" y="1003"/>
<rect x="1121" y="996" width="84" height="18.500" rx="5" class="dd"/><text class="w" x="1128" y="1008">绝对尺寸</text><use href="#tri" x="1192" y="1003"/>
<rect x="1222" y="996" width="85" height="18.500" rx="9" class="dd"/><text class="w" x="1264" y="1009" text-anchor="middle">应用</text>

<!-- status bar -->
<path d="M0 1021H1311" stroke="#5a5a5a"/><rect x="4" y="1024" width="12" height="13" fill="url(#dt)"/>
<path d="M1314 530V1039" stroke="#3c3c3c"/>

<!-- object manager -->
<rect x="1316.500" y="52.500" width="579" height="475.500" fill="#434343" stroke="#5c5c5c"/>
<rect x="1317" y="53" width="578" height="23" fill="#484848"/><path d="M1317 76.500H1895" stroke="#666"/>
<rect x="1322" y="58" width="11" height="10" fill="url(#dt)"/>
<text class="y" x="1342" y="67">文件</text><text x="1378" y="67">编辑</text><text x="1414" y="67">查看</text><text class="y" x="1450" y="67">对象</text><text class="y" x="1486" y="67">标签</text><text x="1522" y="67">书签</text>
<circle cx="1829" cy="61" r="4.500" fill="none" stroke="#111" stroke-width="1.300"/><path d="M1832 65 1837 70" stroke="#111" stroke-width="2"/>
<path d="M1849 57 1856 64H1853V69H1845V64H1842Z" fill="none" stroke="#111" stroke-width="1.800"/>
<ellipse cx="1868" cy="64" rx="5.500" ry="2.800" fill="none" stroke="#777"/>
<rect x="1881" y="56" width="12" height="15" fill="#444" stroke="#222"/><path d="M1881 58.500H1893" stroke="#111" stroke-width="2"/><path d="M1887 61V69M1883 65H1891" stroke="#bbb" stroke-width="1.300"/>
<rect x="1317" y="98" width="578" height="20" fill="#484848"/><rect x="1317" y="138" width="578" height="20" fill="#484848"/><rect x="1317" y="178" width="578" height="20" fill="#484848"/>
<path d="M1412.500 77V528M1452.500 77V528" stroke="#2e2e2e"/>
<path d="M1324.500 78V155M1325 88H1320M1336 98V104H1345M1336 158V165M1346 178V184H1355" stroke="#999" fill="none"/>
<g fill="#444" stroke="#aaa"><rect x="1320.500" y="84" width="9" height="9"/><rect x="1320.500" y="144" width="9" height="9"/><rect x="1331.500" y="164" width="9" height="9"/></g><path d="M1322 88.500H1328M1322 148.500H1328M1333 168.500H1339" stroke="#bbb"/>
<circle cx="1341" cy="88" r="6" fill="#c8c8c8" stroke="#333"/><path d="M1335 81h.01M1347 81h.01M1335 95h.01M1347 95h.01M1341 80h.01M1341 96h.01" stroke="#3fe08a" stroke-width="2.200" stroke-linecap="round"/><path d="M1338 86H1344V91H1338Z" fill="#777"/>
<circle cx="1351.500" cy="108" r="6.500" fill="url(#bb)"/>
<path d="M1335 125 1346 128 1344 134 1334 131Z" fill="#6ab0f0"/>
<path d="M1336 147H1347L1346 149 1344 149V156H1339V149L1336 149Z" fill="#3fe08a"/><circle cx="1341" cy="143" r="2.500" fill="#111"/>
<path d="M1351.500 163 1356.500 165.500V171.500L1351.500 174 1346.500 171.500V165.500Z" fill="#3fd88a" stroke="#234"/><circle cx="1351.500" cy="168.500" r="7.500" fill="none" stroke="#222" stroke-dasharray="2 2"/>
<path d="M1362.500 181 1369 194H1356Z" fill="#6ab0f0"/><path d="M1362.500 181h.01M1356 194h.01M1369 194h.01" stroke="#fff" stroke-width="2.500" stroke-linecap="round"/>
<text x="1352" y="92">克隆</text><text x="1363" y="112">球体</text><text x="1352" y="132">平面</text><text x="1352" y="152" style="fill:#b07a14">布料曲面</text><text x="1363" y="172" style="fill:#f5c23e">细分曲面</text><text x="1374" y="192" style="fill:#a87514">平面.1</text>
<g fill="#7a7a7a"><rect x="1416" y="82" width="12" height="12"/><rect x="1416" y="102" width="12" height="12"/><rect x="1416" y="122" width="12" height="12"/><rect x="1416" y="142" width="12" height="12"/><rect x="1416" y="162" width="12" height="12"/><rect x="1416" y="182" width="12" height="12"/></g>
<path d="M1416 94 1428 82M1416 114 1428 102M1416 134 1428 122M1416 154 1428 142M1416 174 1428 162M1416 194 1428 182" stroke="#4c4c4c"/>
<g fill="#e84a4a"><circle cx="1435.500" cy="84" r="2.500"/><circle cx="1435.500" cy="92" r="2.500"/><circle cx="1435.500" cy="124" r="2.500"/><circle cx="1435.500" cy="132" r="2.500"/></g>
<g fill="#777"><circle cx="1435.500" cy="104" r="2.500"/><circle cx="1435.500" cy="112" r="2.500"/><circle cx="1435.500" cy="144" r="2.500"/><circle cx="1435.500" cy="152" r="2.500"/><circle cx="1435.500" cy="164" r="2.500"/><circle cx="1435.500" cy="172" r="2.500"/><circle cx="1435.500" cy="184" r="2.500"/><circle cx="1435.500" cy="192" r="2.500"/></g>
<use href="#ck" x="1445" y="89"/><use href="#ck" x="1445" y="109"/><use href="#ck" x="1445" y="129"/><use href="#ck" x="1445" y="149"/><use href="#ck" x="1445" y="169"/>
<circle cx="1459" cy="84" r="3.500" fill="url(#wb)"/><g fill="#5a78c0"><circle cx="1460" cy="93" r="2"/><circle cx="1467" cy="93" r="2"/><circle cx="1467" cy="86" r="2"/></g><circle cx="1482" cy="86" r="3.500" fill="#d8582a"/><g fill="#aaa"><circle cx="1476" cy="82" r="1.500"/><circle cx="1488" cy="82" r="1.500"/><circle cx="1482" cy="92" r="1.500"/></g>
<use href="#bd" x="1459" y="103"/><use href="#bd" x="1459" y="123"/><use href="#bd" x="1479" y="183"/>
<path d="M1456 187h3v3h-3zM1461 187h3v3h-3zM1466 181h3v3h-3zM1466 187h3v3h-3zM1466 193h3v3h-3zM1471 181h3v3h-3zM1471 187h3v3h-3zM1471 193h3v3h-3z" fill="#7a9ae8"/>
<rect x="1495" y="180" width="14" height="14" fill="#eee" stroke="#8a5a2a" stroke-width="1.500"/><path d="M1496 181h4v4h-4zM1504 181h4v4h-4zM1500 185h4v4h-4zM1496 189h4v4h-4zM1504 189h4v4h-4z" fill="#111"/>

<!-- right tabs -->
<path d="M1897 86H1919V119H1897Z" class="tb"/><path d="M1897 119H1919V186H1897Z" class="tb"/><path d="M1897 186H1919V222H1897Z" class="tb"/>
<rect x="1897" y="52" width="22.500" height="33" rx="3" fill="#5e5e5e" stroke="#333"/>
<text transform="translate(1905 58) rotate(90)" class="o">对象</text>
<text transform="translate(1905 92) rotate(90)" style="fill:#888">场次</text>
<text transform="translate(1905 126) rotate(90)" style="fill:#888">内容浏览器</text>
<text transform="translate(1905 193) rotate(90)" style="fill:#888">构造</text>
<path d="M1897 566H1919V590H1897Z" fill="#363636" stroke="#2c2c2c"/><rect x="1897" y="534" width="22.500" height="32" rx="3" fill="#5e5e5e" stroke="#333"/>
<text transform="translate(1905 538) rotate(90)" class="o">属性</text>
<text transform="translate(1905 572) rotate(90)" style="fill:#777">层</text>

<!-- attribute manager -->
<rect x="1316.500" y="533" width="579" height="506" fill="#434343" stroke="#3c3c3c"/>
<rect x="1316.500" y="533" width="579" height="24" fill="url(#hd)" stroke="#3c3c3c"/>
<rect x="1322" y="539" width="11" height="12" fill="url(#dt)"/>
<text x="1342" y="550" class="w">模式</text><text x="1378" y="550" class="w">编辑</text><text x="1414" y="550" class="w">用户数据</text>
<path d="M1752 546 1767 540V552Z" fill="#111"/><path d="M1786 546 1771 540V552Z" fill="#6f6f6f" stroke="#7a7a7a"/>
<path d="M1802 539 1809 554 1802 551 1795 554Z" fill="#111"/>
<circle cx="1827" cy="544" r="3.800" fill="none" stroke="#111" stroke-width="1.300"/><path d="M1830 547 1834 552" stroke="#111" stroke-width="1.800"/>
<rect x="1845" y="546" width="11" height="8" fill="none" stroke="#222" stroke-width="1.300"/><path d="M1847.500 546V541A3 3 0 0 1 1853.500 541" fill="none" stroke="#222" stroke-width="1.300"/>
<circle cx="1867.600" cy="546" r="6.500" fill="none" stroke="#222" stroke-width="1.300"/><circle cx="1867.600" cy="546" r="3" fill="#222"/>
<rect x="1881" y="539" width="12" height="14" fill="#555" stroke="#222"/><path d="M1881 541H1893" stroke="#111" stroke-width="2"/><path d="M1887 544V552M1883 548H1891" stroke="#ddd"/>
<path d="M1329.500 566.500 1334.500 569V575L1329.500 577.500 1324.500 575V569Z" fill="#3fd88a" stroke="#234"/><circle cx="1329.500" cy="572" r="7.500" fill="none" stroke="#ccc" stroke-dasharray="1.500 3"/>
<text x="1344" y="576">细分曲面 [细分曲面]</text>
<rect x="1318.500" y="586" width="90" height="20" rx="3" fill="#5e5e5e" stroke="#2a2a2a"/><rect x="1379" y="586.500" width="29.500" height="19" fill="#88a6d0"/><path d="M1348.500 586V606M1379 586V606" stroke="#3a3a3a"/>
<text class="w" x="1322" y="600">基本</text><text class="w" x="1352" y="600">坐标</text><text class="k" x="1382" y="600">对象</text>
<rect x="1318" y="611" width="575" height="18" fill="#333"/><text class="w" x="1320" y="624">对象属性</text>
<use href="#rad" x="1327" y="643"/><use href="#rad" x="1327" y="665"/><use href="#rad" x="1327" y="688"/><use href="#rad" x="1327" y="710"/>
<text x="1342" y="647">类型. . . . . .</text><text x="1342" y="669">编辑器细分</text><text x="1342" y="692">渲染器细分</text><text x="1342" y="714">细分 UV . . .</text>
<rect x="1402" y="634.500" width="219" height="18" rx="4" class="dd"/><text class="w" x="1409" y="647">Catmull-Clark(N-Gons)</text><use href="#tri" x="1608" y="641"/>
<rect x="1402" y="701.500" width="219" height="18" rx="4" class="dd"/><text class="w" x="1409" y="714">标准</text><use href="#tri" x="1608" y="708"/>
<rect x="1402" y="655.500" width="66" height="20" class="f"/><text x="1407" y="670">1</text><use href="#spin" x="1460" y="660"/>
<rect x="1402" y="678.500" width="66" height="20" class="f"/><text x="1407" y="693">1</text><use href="#spin" x="1460" y="683"/>

<!-- floating badge -->
<rect x="1839.500" y="632.500" width="60" height="26" rx="13" fill="#fff" stroke="#2a8cf0" stroke-width="1.200"/>
<text x="1850" y="651" style="font-size:13px;font-weight:700;fill:#1f80e8">英</text>
<circle cx="1894.800" cy="634.800" r="24" fill="#fff" stroke="#2a8cf0" stroke-width="1.800"/><circle cx="1894.800" cy="634.800" r="21" fill="#fff" stroke="#222" stroke-width="1.300"/>
<path d="M1889.500 630H1899.500L1897.500 640 1894.500 645 1891.500 640Z" fill="#111"/><path d="M1890 630C1887 628 1885 626 1884 622M1887 628 1884 627M1888 626 1887.500 622M1899 630C1902 628 1904 626 1905 622M1902 628 1905 627M1901 626 1901.500 622" fill="none" stroke="#111" stroke-width="1.100"/>
<text x="1894.500" y="652" text-anchor="middle" style="font-size:6px;fill:#111">野鹿客</text>

<!-- red annotation -->
<rect x="1303.500" y="128.500" width="168" height="56" fill="none" stroke="#e8131f" stroke-width="2.500"/>
</svg>
</body></html>
